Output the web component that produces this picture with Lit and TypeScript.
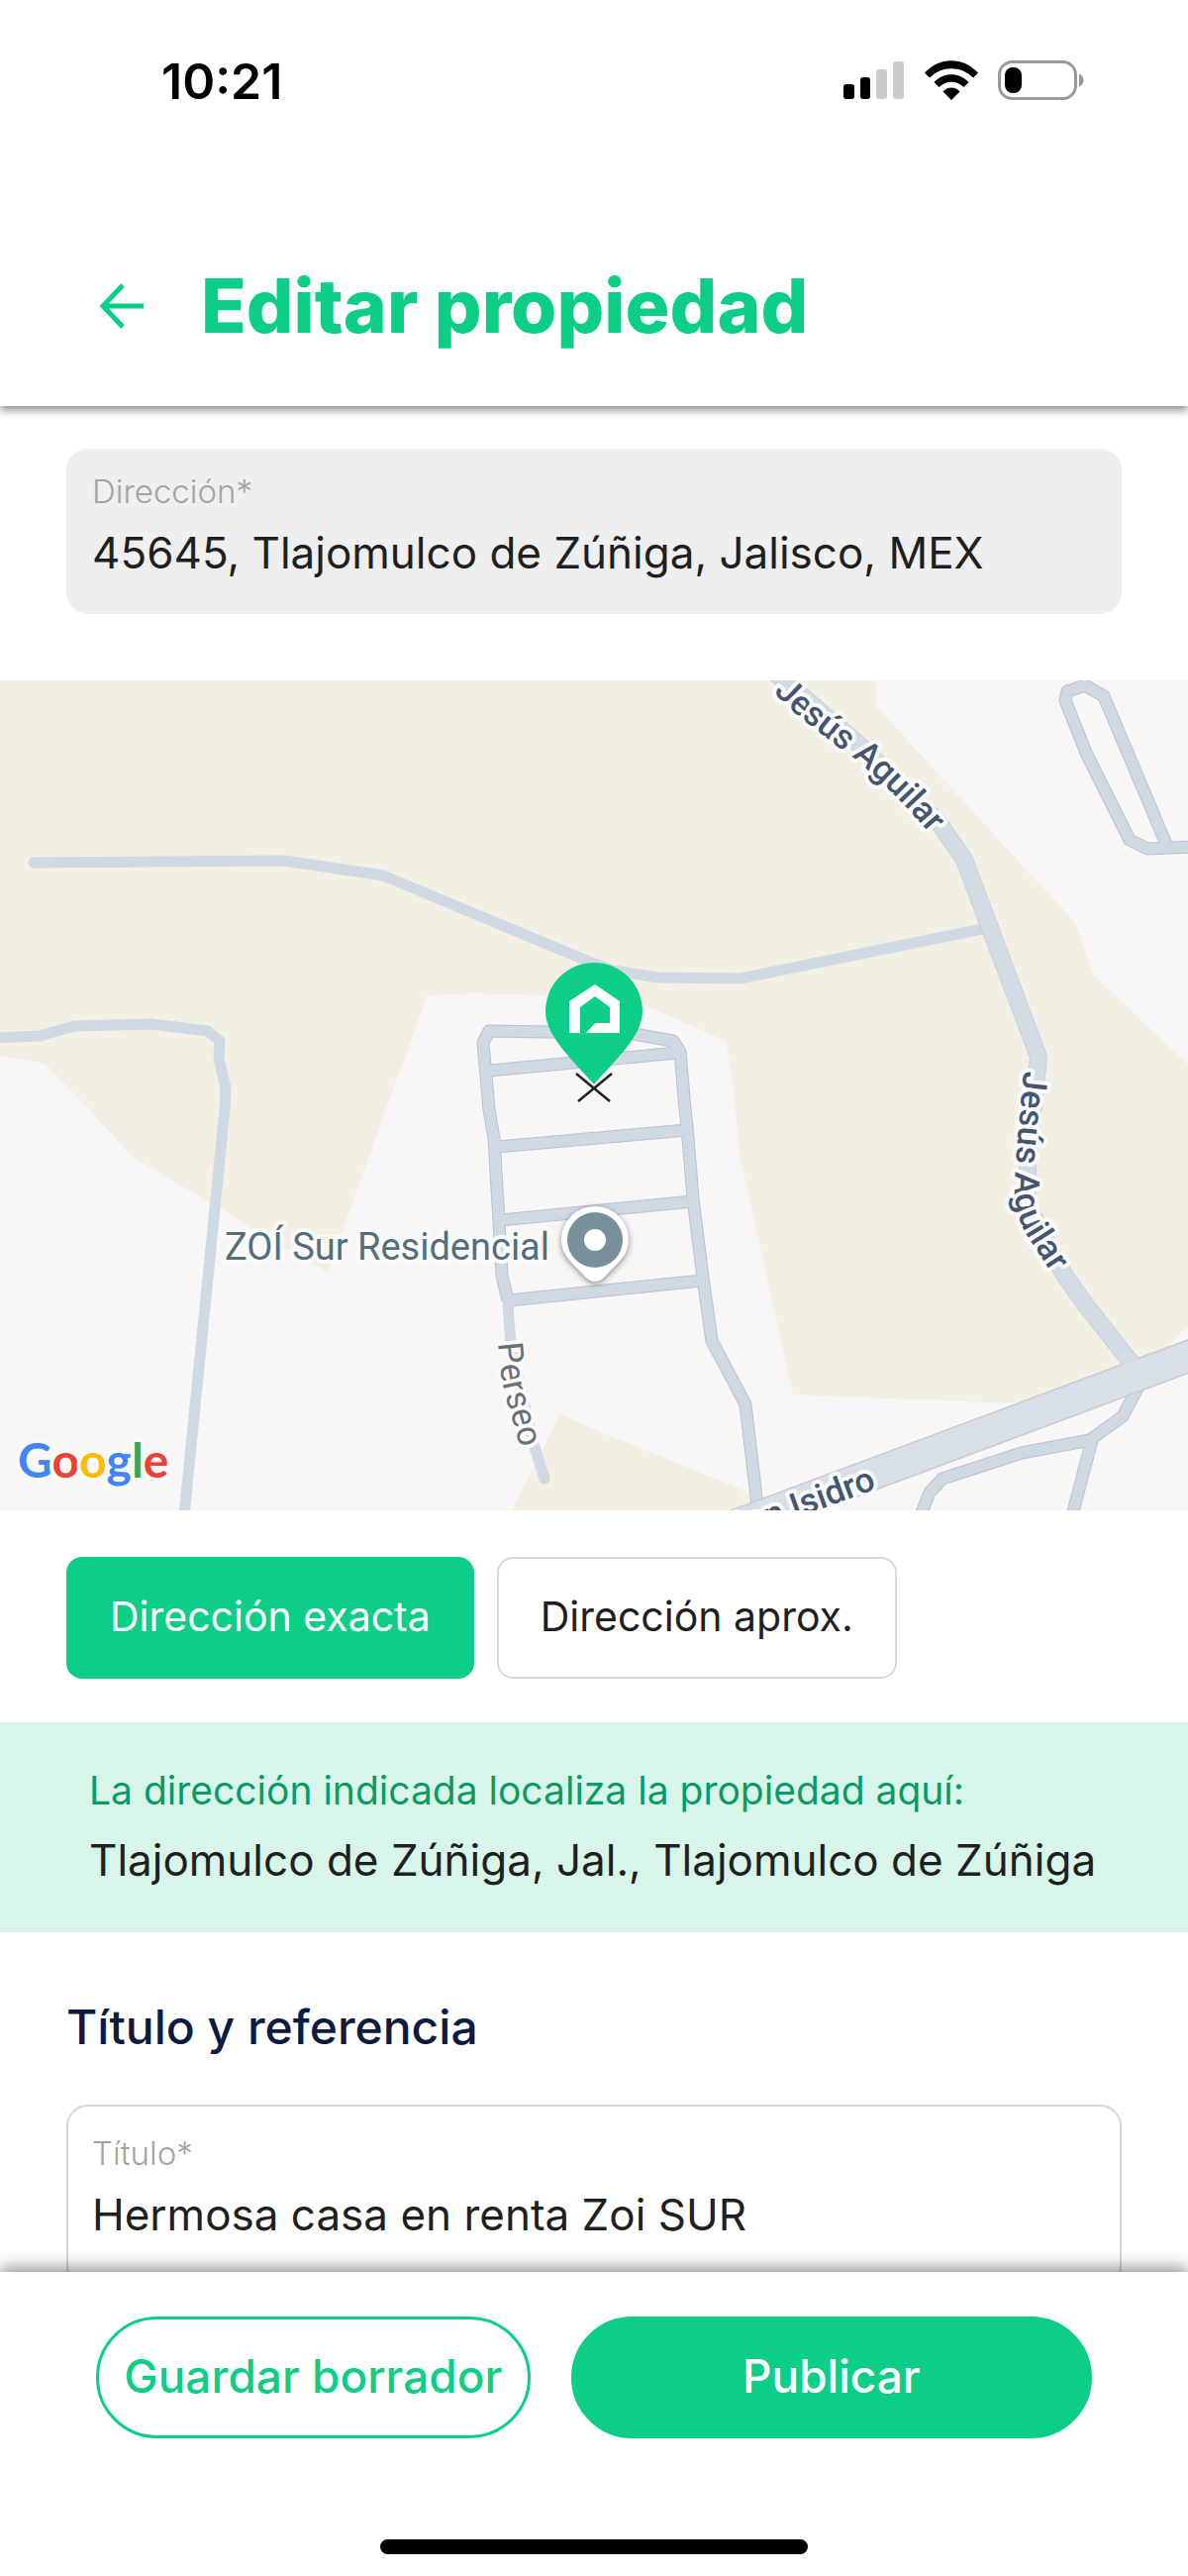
import { LitElement, html, css, svg } from "lit";
import { customElement, property, state } from "lit/decorators.js";

const FONT = css`Inter, "Liberation Sans", sans-serif`;

/* ---------- Status bar ---------- */

@customElement("status-bar")
export class StatusBar extends LitElement {
  static styles = css`
    :host {
      display: flex;
      align-items: center;
      justify-content: space-between;
      padding: 52px 104px 0 163px;
      font-family: ${FONT};
    }
    .time {
      font-size: 50px;
      font-weight: 600;
      line-height: 60px;
      color: #000;
    }
    .icons {
      display: flex;
      align-items: center;
      gap: 20px;
    }
    svg {
      display: block;
    }
  `;

  render() {
    return html`
      <span class="time">10:21</span>
      <div class="icons">
        <svg width="62" height="42" viewBox="0 0 62 42" role="img" aria-label="Señal">
          <rect x="0" y="24" width="11" height="15" rx="3" fill="#000" />
          <rect x="17" y="17" width="10" height="22" rx="3" fill="#000" />
          <rect x="33" y="9" width="11" height="30" rx="3" fill="#cbcbcb" />
          <rect x="50" y="1" width="11" height="38" rx="3" fill="#cbcbcb" />
        </svg>
        <svg width="54" height="42" viewBox="0 0 54 42" role="img" aria-label="Wi-Fi">
          <path d="M0 12.500C15-4 39-4 54 12.500L49 17.500C37 5 17 5 5 17.500Z" />
          <path d="M9.500 22C19 11.500 35 11.500 44.500 22L39.500 27C32 20 22 20 14.500 27Z" />
          <path d="M18.500 31.500C23 26 31 26 35.500 31.500L27 40Z" />
        </svg>
        <svg width="88" height="42" viewBox="0 0 88 42" role="img" aria-label="Batería">
          <rect x="1.500" y="1.500" width="77" height="37" rx="13" fill="none" stroke="#999" stroke-width="3" />
          <rect x="7" y="7" width="17" height="26" rx="8" fill="#000" />
          <path d="M82 13.500C88 15 88 25 82 26.500Z" fill="#999" />
        </svg>
      </div>
    `;
  }
}

/* ---------- Labelled text field ---------- */

@customElement("text-field")
export class TextField extends LitElement {
  @property() label = "";
  @property() value = "";
  @property({ type: Boolean, reflect: true }) locked = false;

  static styles = css`
    :host {
      display: block;
      font-family: ${FONT};
    }
    .field {
      display: flex;
      flex-direction: column;
      gap: 8px;
      padding: 27px 24px 30px;
      border: 2px solid #d6d6d6;
      border-radius: 22px;
      background: #fff;
    }
    :host([locked]) .field {
      padding: 21px 24px 18px;
      border-color: #efefef;
      background: #efefef;
    }
    label {
      font-size: 33px;
      font-weight: 300;
      line-height: 40px;
      color: #a3a3a3;
    }
    input {
      width: 100%;
      height: 76px;
      box-sizing: border-box;
      margin: 0;
      padding: 0 0 8px;
      border: 0;
      outline: 0;
      background: transparent;
      font-family: inherit;
      font-size: 44px;
      font-weight: 400;
      color: #1f1f1f;
    }
  `;

  render() {
    return html`
      <div class="field">
        <label for="control">${this.label}</label>
        <input id="control" type="text" .value=${this.value} ?readonly=${this.locked} />
      </div>
    `;
  }
}

/* ---------- Map ---------- */

const EDGED_ROADS = [
  "M513 1313L507 1288L504 1233L499 1150L494 1120L488 1053L494 1041L555 1042L640 1044L680 1051L687 1062L692 1120L694 1137L700 1210L710 1290L719 1354L753 1418L765 1520",
  "M494 1081L684 1063",
  "M502 1158L694 1141",
  "M506 1232L700 1213",
  "M514 1313L709 1293",
  "M1180 857L1115 703L1096 692L1078 698L1076 707L1097 760L1141 848L1159 857L1204 855",
  "M1150 1400L1134 1430L1101 1454L1032 1467L952 1493L939 1507L930 1530",
  "M1103 1454L1083 1530",
];

@customElement("location-map")
export class LocationMap extends LitElement {
  static styles = css`
    :host {
      display: block;
    }
    svg {
      display: block;
      width: 100%;
      height: 838px;
      background: #f8f6f7;
    }
    .land {
      fill: #f4efe3;
    }
    .road,
    .edge,
    .main,
    .main-edge,
    .highway,
    .highway-edge {
      fill: none;
      stroke-linejoin: round;
    }
    .road {
      stroke: #cfd9e3;
      stroke-width: 11;
    }
    .path {
      stroke-linecap: round;
    }
    .edge {
      stroke: #b9c0ce;
      stroke-width: 13;
    }
    .main {
      stroke: #d2dce4;
      stroke-width: 16;
    }
    .main-edge {
      stroke: #c5cfd6;
      stroke-width: 18;
    }
    .highway {
      stroke: #d8dfe6;
      stroke-width: 30;
    }
    .highway-edge {
      stroke: #c1ccd5;
      stroke-width: 33;
    }
    text {
      font-family: Roboto, "Liberation Sans", sans-serif;
      font-size: 35px;
      paint-order: stroke;
      stroke: #fbfafb;
      stroke-width: 8;
      stroke-linejoin: round;
    }
    .street {
      font-weight: 500;
      fill: #44566f;
    }
    .lane {
      fill: #6b7075;
    }
    .place {
      font-size: 38px;
      fill: #546e7a;
    }
    .brand {
      font-family: Lato, "Liberation Sans", sans-serif;
      font-size: 48px;
      font-weight: 700;
    }
    .blue {
      fill: #4285f4;
    }
    .red {
      fill: #ea4335;
    }
    .yellow {
      fill: #fbbc05;
    }
    .green {
      fill: #34a853;
    }
    .poi {
      filter: drop-shadow(0 2px 3px rgba(0, 0, 0, 0.45));
    }
  `;

  render() {
    return html`
      <svg viewBox="0 687 1200 838" preserveAspectRatio="xMidYMid slice" role="img" aria-label="Mapa de la propiedad">
        <defs>
          <path id="north" d="M781 699L804 721L850 757L868 770Q907 803 946 850" />
          <path id="south" d="M1034 1081L1026 1172L1025 1200Q1025 1228 1039 1250L1078 1310" />
          <path id="lane" d="M503 1356L505 1378Q508 1405 515 1424L528 1470" />
        </defs>
        <path class="land" d="M0 687H885V713L1086 932L1104 984L1200 1075V1338L1180 1359L1160 1390L1020 1417L801 1408L747 1165L741 1100L734 1052L650 1014L551 1005L478 1003L432 1005L397 1100L331 1285L134 1168L71 1100L45 1074L0 1066Z" />
        <path class="land" d="M566 1428L600 1443L759 1508L800 1525H517Z" />
        <path class="road path" d="M34 871L287 869L387 884L600 973L619 980L665 987L748 988L992 938" />
        <path class="road path" d="M-6 1048L40 1046L75 1036L153 1034L210 1041L222 1051L221 1068L228 1099L227 1120L186 1530" />
        ${EDGED_ROADS.map((d) => svg`<path class="edge" d=${d} />`)}
        <path class="road path" d="M513 1313L514 1333L516 1357L538 1455L550 1493" />
        ${EDGED_ROADS.map((d) => svg`<path class="road" d=${d} />`)}
        <path class="main-edge" d="M780 677L868 752L948 830L974 868L1049 1067L1038 1177V1217L1052 1243L1075 1287L1097 1318L1149 1384" />
        <path class="highway-edge" d="M1210 1366L730 1545" />
        <path class="main" d="M780 677L868 752L948 830L974 868L1049 1067L1038 1177V1217L1052 1243L1075 1287L1097 1318L1149 1384" />
        <path class="highway" d="M1210 1366L730 1545" />

        <text class="street"><textPath href="#north">Jesús Aguilar</textPath></text>
        <text class="street"><textPath href="#south">Jesús Aguilar</textPath></text>
        <text class="lane"><textPath href="#lane">Perseo</textPath></text>
        <text class="street" transform="translate(886 1503) rotate(-20)" text-anchor="end">San Isidro</text>
        <text class="place" x="227" y="1272">ZOÍ Sur Residencial</text>
        <text class="brand" x="18" y="1492"><tspan class="blue">G</tspan><tspan class="red">o</tspan><tspan class="yellow">o</tspan><tspan class="blue">g</tspan><tspan class="green">l</tspan><tspan class="red">e</tspan></text>

        <g class="poi">
          <path d="M601 1218A34 34 0 0 1 635 1252C635 1268 623 1276 610 1290Q601 1298 592 1290C579 1276 567 1268 567 1252A34 34 0 0 1 601 1218Z" fill="#fff" />
        </g>
        <circle cx="601" cy="1252" r="28" fill="#78909c" />
        <circle cx="601" cy="1252" r="11" fill="#fff" />

        <path d="M582 1084L616 1112M618 1084L584 1112" stroke="#222" stroke-width="2.500" />
        <path d="M600 972A49 49 0 0 1 649 1021C649 1045 625 1067 600 1095C575 1067 551 1045 551 1021A49 49 0 0 1 600 972Z" fill="#0dce87" />
        <path d="M575 1043V1011L601 994L626 1011V1043H592L601 1033H616V1017L601 1006L586 1017V1043Z" fill="#fff" />
      </svg>
    `;
  }
}

/* ---------- Page ---------- */

@customElement("app-root")
export class AppRoot extends LitElement {
  @state() private exact = true;

  static styles = css`
    :host {
      display: flex;
      flex-direction: column;
      height: 100vh;
      background: #fff;
      font-family: ${FONT};
      color: #1f1f1f;
    }
    button {
      font-family: inherit;
      cursor: pointer;
    }
    .top {
      position: relative;
      z-index: 1;
      flex: none;
      background: #fff;
      box-shadow: 0 4px 8px rgba(0, 0, 0, 0.45);
    }
    .title-row {
      display: flex;
      align-items: center;
      gap: 52px;
      padding: 147px 67px 51px 95px;
    }
    .back {
      display: flex;
      padding: 0;
      border: 0;
      background: none;
    }
    h1 {
      margin: 0;
      font-size: 75px;
      font-weight: 800;
      line-height: 100px;
      color: #0dce87;
    }
    main {
      flex: 1;
      min-height: 0;
      overflow-y: auto;
      scrollbar-width: none;
    }
    .address {
      padding: 43px 67px 67px;
    }
    .precision {
      display: flex;
      gap: 23px;
      padding: 47px 67px 44px;
    }
    .choice {
      height: 123px;
      padding: 0 42px 4px;
      border: 2px solid #d9d9d9;
      border-radius: 16px;
      background: #fff;
      font-size: 41px;
      color: #1f1f1f;
    }
    .choice[aria-pressed="true"] {
      border-color: #0dce87;
      background: #0dce87;
      color: #fff;
    }
    .notice {
      display: flex;
      flex-direction: column;
      gap: 14px;
      padding: 41px 90px 45px;
      background: #d7f6e9;
    }
    .notice p {
      margin: 0;
    }
    .hint {
      font-size: 39px;
      line-height: 56px;
      color: #0b9a66;
    }
    .place {
      font-size: 44px;
      line-height: 56px;
    }
    .reference {
      padding: 66px 67px;
    }
    h2 {
      margin: 0 0 48px;
      font-size: 48px;
      font-weight: 500;
      line-height: 60px;
      color: #0e1a40;
    }
    .actions {
      position: relative;
      z-index: 1;
      flex: none;
      background: #fff;
      box-shadow: 0 -4px 16px rgba(0, 0, 0, 0.45);
    }
    .pair {
      display: grid;
      grid-template-columns: 5fr 6fr;
      gap: 41px;
      padding: 45px 97px 102px;
    }
    .pill {
      height: 123px;
      padding: 0 0 4px;
      border: 3px solid #0dce87;
      border-radius: 62px;
      background: #fff;
      font-size: 46px;
      font-weight: 500;
      color: #0dce87;
    }
    .primary {
      background: #0dce87;
      color: #fff;
    }
    .home {
      width: 36%;
      height: 15px;
      margin: 0 auto 22px;
      border-radius: 8px;
      background: #000;
    }
  `;

  render() {
    return html`
      <header class="top">
        <status-bar></status-bar>
        <div class="title-row">
          <button class="back" aria-label="Volver">
            <svg width="56" height="56" viewBox="0 0 56 56" fill="none" stroke="#0dce87" stroke-width="5">
              <path d="M50 28H10M29 7L9 28L29 49" />
            </svg>
          </button>
          <h1>Editar propiedad</h1>
        </div>
      </header>

      <main>
        <section class="address">
          <text-field locked label="Dirección*" value="45645, Tlajomulco de Zúñiga, Jalisco, MEX"></text-field>
        </section>

        <location-map></location-map>

        <section class="precision">
          <button class="choice" aria-pressed=${String(this.exact)} @click=${() => (this.exact = true)}>
            Dirección exacta
          </button>
          <button class="choice" aria-pressed=${String(!this.exact)} @click=${() => (this.exact = false)}>
            Dirección aprox.
          </button>
        </section>

        <section class="notice">
          <p class="hint">La dirección indicada localiza la propiedad aquí:</p>
          <p class="place">Tlajomulco de Zúñiga, Jal., Tlajomulco de Zúñiga</p>
        </section>

        <section class="reference">
          <h2>Título y referencia</h2>
          <text-field label="Título*" value="Hermosa casa en renta Zoi SUR"></text-field>
        </section>
      </main>

      <footer class="actions">
        <div class="pair">
          <button class="pill">Guardar borrador</button>
          <button class="pill primary">Publicar</button>
        </div>
        <div class="home"></div>
      </footer>
    `;
  }
}
